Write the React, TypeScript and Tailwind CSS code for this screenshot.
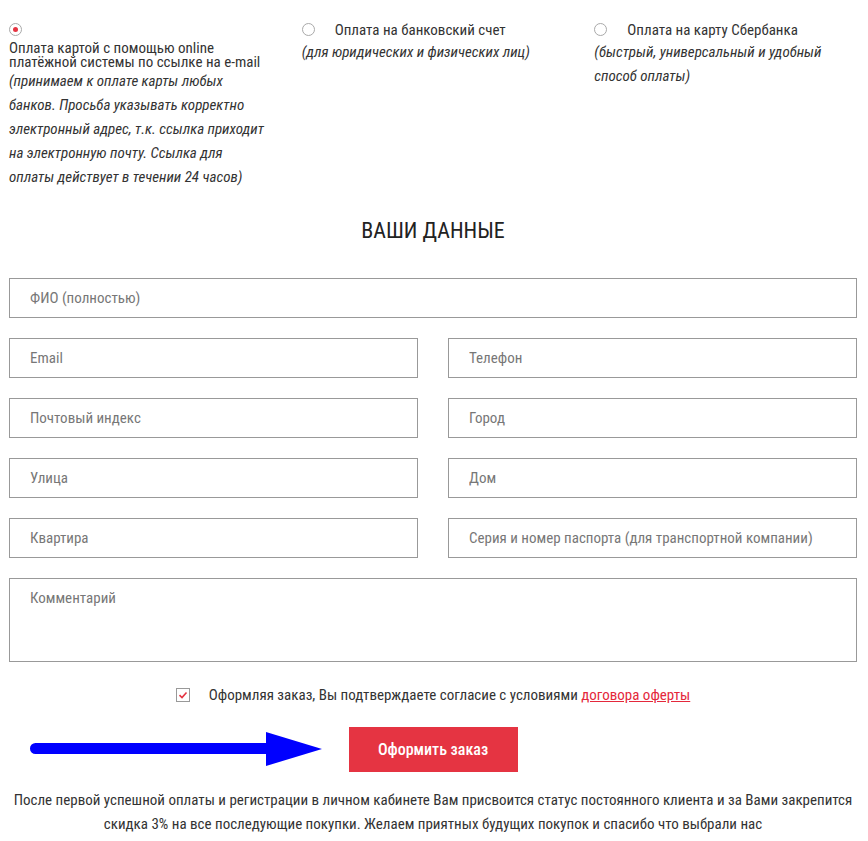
import React from 'react'

const Radio = ({ checked = false }: { checked?: boolean }) => (
  <span className="w-[13px] h-[13px] rounded-full border border-[#a9a9a9] bg-white flex items-center justify-center shrink-0">
    {checked && <span className="w-[5px] h-[5px] rounded-full bg-[#e53442]" />}
  </span>
)

const Field = ({ placeholder }: { placeholder: string }) => (
  <input
    placeholder={placeholder}
    className="w-full h-10 border border-[#999] bg-white pl-[20px] pr-3 text-[15px] text-[#333] placeholder:text-[#777] outline-none"
  />
)

const App = () => {
  return (
    <div className="w-[868px] min-h-[841px] bg-white pl-[9px] pr-[11px] pt-[23px] font-['Roboto_Condensed','Roboto',sans-serif] font-stretch-condensed text-[15px] text-[#333]">
      <div className="grid grid-cols-3 gap-x-[30px]">
        <div>
          <Radio checked />
          <p className="mt-[5px] leading-[14px]">Оплата картой с помощью online платёжной системы по ссылке на e-mail</p>
          <p className="italic leading-6 pr-1">
            (принимаем к оплате карты любых банков. Просьба указывать корректно электронный адрес, т.к. ссылка приходит на электронную почту. Ссылка для оплаты действует в течении 24 часов)
          </p>
        </div>
        <div>
          <div className="flex items-center gap-[20px] h-[13px]">
            <Radio />
            <span className="leading-[14px]">Оплата на банковский счет</span>
          </div>
          <p className="italic leading-6 mt-[4px]">(для юридических и физических лиц)</p>
        </div>
        <div>
          <div className="flex items-center gap-[20px] h-[13px]">
            <Radio />
            <span className="leading-[14px]">Оплата на карту Сбербанка</span>
          </div>
          <p className="italic leading-6 mt-[4px]">(быстрый, универсальный и удобный способ оплаты)</p>
        </div>
      </div>

      <h2 className="mt-[28px] text-center text-[22px] leading-[28px] text-[#222] uppercase">Ваши данные</h2>

      <div className="mt-[33px] flex flex-col gap-[20px]">
        <Field placeholder="ФИО (полностью)" />
        <div className="grid grid-cols-2 gap-x-[30px] gap-y-[20px]">
          <Field placeholder="Email" />
          <Field placeholder="Телефон" />
          <Field placeholder="Почтовый индекс" />
          <Field placeholder="Город" />
          <Field placeholder="Улица" />
          <Field placeholder="Дом" />
          <Field placeholder="Квартира" />
          <Field placeholder="Серия и номер паспорта (для транспортной компании)" />
        </div>
        <textarea
          placeholder="Комментарий"
          className="w-full h-[84px] border border-[#999] bg-white pl-[20px] pr-3 pt-[9px] text-[15px] leading-5 text-[#333] placeholder:text-[#777] outline-none resize-none block"
        />
      </div>

      <div className="mt-[24px] flex items-center justify-center gap-[19px] leading-[18px]">
        <span className="w-[14px] h-[14px] border border-[#999] bg-white flex items-center justify-center">
          <svg width="10" height="10" viewBox="0 0 10 10">
            <path d="M1.5 5.2 L4 7.5 L8.5 2.5" fill="none" stroke="#e53442" strokeWidth="1.6" />
          </svg>
        </span>
        <span>
          Оформляя заказ, Вы подтверждаете согласие с условиями{' '}
          <a href="#" className="text-[#e4283b] underline">договора оферты</a>
        </span>
      </div>

      <div className="relative mt-[23px] flex justify-center">
        <svg className="absolute left-[21px] top-[5px]" width="292" height="34" viewBox="0 0 292 34">
          <line x1="5.5" y1="16.5" x2="240" y2="16.5" stroke="#0000ff" strokeWidth="11" strokeLinecap="round" />
          <polygon points="236,0 292,17 236,34" fill="#0000ff" />
        </svg>
        <button className="w-[169px] h-[45px] bg-[#e53442] text-white text-[16px] font-medium">Оформить заказ</button>
      </div>

      <p className="mt-[16px] text-center leading-6">
        После первой успешной оплаты и регистрации в личном кабинете Вам присвоится статус постоянного клиента и за Вами закрепится
        <br />
        скидка 3% на все последующие покупки. Желаем приятных будущих покупок и спасибо что выбрали нас
      </p>
    </div>
  )
}

export default App
